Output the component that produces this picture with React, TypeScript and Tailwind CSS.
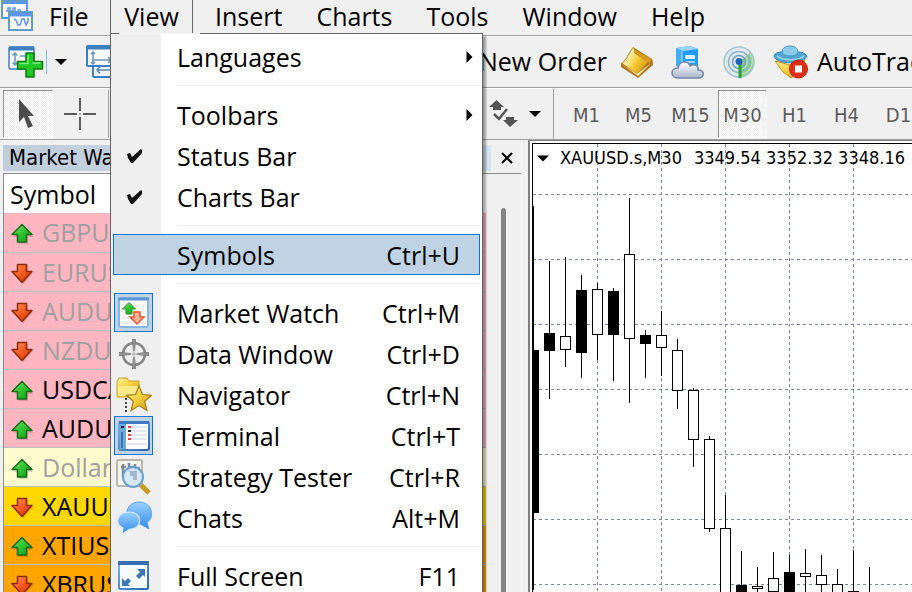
import React from 'react';

type IconProps = { className?: string };

const Defs: React.FC = () => (
  <svg width="0" height="0" className="absolute" aria-hidden="true">
    <defs>
      <linearGradient id="green" x1="0" y1="0" x2="1" y2="1">
        <stop offset="0" stopColor="#7be07b" />
        <stop offset="0.5" stopColor="#2fc42f" />
        <stop offset="1" stopColor="#159a15" />
      </linearGradient>
      <linearGradient id="red" x1="0" y1="0" x2="1" y2="1">
        <stop offset="0" stopColor="#ffa070" />
        <stop offset="0.5" stopColor="#f4581c" />
        <stop offset="1" stopColor="#c53a08" />
      </linearGradient>
      <linearGradient id="gold" x1="0" y1="0" x2="1" y2="1">
        <stop offset="0" stopColor="#fff0a0" />
        <stop offset="0.5" stopColor="#f4cf3c" />
        <stop offset="1" stopColor="#c79412" />
      </linearGradient>
      <linearGradient id="book" x1="0" y1="0" x2="1" y2="0.6">
        <stop offset="0" stopColor="#d79a18" />
        <stop offset="0.35" stopColor="#fff0a0" />
        <stop offset="0.65" stopColor="#f4c832" />
        <stop offset="1" stopColor="#dc9c18" />
      </linearGradient>
      <linearGradient id="blue" x1="0" y1="0" x2="0" y2="1">
        <stop offset="0" stopColor="#9ad2ff" />
        <stop offset="1" stopColor="#3388e6" />
      </linearGradient>
      <linearGradient id="frame" x1="0" y1="0" x2="1" y2="1">
        <stop offset="0" stopColor="#78b2ea" />
        <stop offset="1" stopColor="#2868b0" />
      </linearGradient>
      <linearGradient id="cloud" x1="0" y1="0" x2="0" y2="1">
        <stop offset="0" stopColor="#ffffff" />
        <stop offset="1" stopColor="#aab6cc" />
      </linearGradient>
    </defs>
  </svg>
);

const AppLogo: React.FC<IconProps> = ({ className }) => (
  <svg viewBox="0 0 34 32" className={className}>
    <rect x="2" y="1" width="25" height="17" fill="#fff" stroke="#5b93ff" strokeWidth="2" />
    <path d="M2 2h25" stroke="#5b93ff" strokeWidth="4" />
    <path d="M6 11h2V8h2v3h3V8h2v4h3v-2h3" fill="none" stroke="#5b93ff" strokeWidth="1.5" />
    <rect x="9" y="12" width="23" height="18" fill="#fff" stroke="#5b93ff" strokeWidth="2" />
    <path d="M9 14h23" stroke="#5b93ff" strokeWidth="5" />
    <path d="M14 19l2 1 2 5h2l2-6h2l2 6 2-4v-3" fill="none" stroke="#5b93ff" strokeWidth="1.500" />
    <path d="M2 1h25M2 1v17M9 12v18h23V12z" fill="none" stroke="#69a58a" strokeWidth="2" strokeDasharray="3 4" />
  </svg>
);

const NewChartIcon: React.FC<IconProps> = ({ className }) => (
  <svg viewBox="0 0 36 34" className={className}>
    <rect x="1" y="2" width="25" height="22" rx="1.5" fill="#f7fbff" stroke="#3e7fc2" strokeWidth="1.5" />
    <path d="M1 3.500h25" stroke="#3e7fc2" strokeWidth="4" />
    <path d="M7 8v12M4.500 10.500L7 8l2.500 2.500M4.500 17.500L7 20l2.500-2.500M12 11h6" fill="none" stroke="#6c95b8" strokeWidth="1.500" />
    <path
      d="M18 8h8v8.500h8.500v7.500H26v8h-8v-8H9.500v-7.500H18z"
      fill="#1fc926"
      stroke="#0b7a10"
      strokeWidth="1.500"
      strokeLinejoin="round"
    />
    <path d="M20 10v8.500h-8.500M24.500 18h8" stroke="#7df07e" strokeWidth="1.500" fill="none" />
  </svg>
);

const ProfilesIcon: React.FC<IconProps> = ({ className }) => (
  <svg viewBox="0 0 36 36" className={className}>
    <rect x="7" y="16" width="27" height="17" rx="1" fill="#eef6fd" stroke="#3e7fc2" strokeWidth="2" />
    <path d="M11 26h20M14 22.500L11 26l3 3.500" fill="none" stroke="#5f86a8" strokeWidth="1.5" />
    <rect x="1" y="2" width="30" height="20" rx="1" fill="#f7fbff" stroke="#3e7fc2" strokeWidth="2" />
    <path d="M1 3.500h30" stroke="#3e7fc2" strokeWidth="4" />
    <path d="M7 8v12M5 10l2-2 2 2M5 18l2 2 2-2M7 16h18M22 13l3 3-3 3" fill="none" stroke="#6c95b8" strokeWidth="1.500" />
  </svg>
);

const BookIcon: React.FC<IconProps> = ({ className }) => (
  <svg viewBox="0 0 34 34" className={className}>
    <path d="M1 18c6-3 7-10 12-16l19 12c1 2 1 4 1 6L18 33 1 22z" fill="#b0761a" />
    <path d="M2 18c6-3 7-10 11-15 1 1 2 3 1 5l14 9-11 12z" fill="url(#book)" />
    <path d="M15 8l-1-4 17 10-1 4-2-1z" fill="#d89a20" />
    <path d="M3 20l14 9 14-11-13 13z" fill="#fff3bf" />
  </svg>
);

const CloudIcon: React.FC<IconProps> = ({ className }) => (
  <svg viewBox="0 0 34 34" className={className}>
    <path d="M5 3l14-2 8 3v20H9L5 20z" fill="#1d9bf6" />
    <path d="M5 3l6 3v18l-6-3z" fill="#3fb0fb" />
    <path d="M5 3l14-2 8 3-15 2z" fill="#9ad6fd" />
    <path d="M11 6v17" stroke="#c3e6ff" />
    <rect x="14" y="10" width="10" height="4" rx="1" fill="#d8f0ff" />
    <rect x="14" y="16" width="10" height="2" fill="#9dd7ff" />
    <path
      d="M7 33c-8 0-8-10 0-10 1-7 10-8 12-2 5-3 9 0 8 4 7 0 7 8 0 8z"
      fill="url(#cloud)"
      stroke="#7687a8"
      strokeWidth="1.5"
    />
  </svg>
);

const SignalIcon: React.FC<IconProps> = ({ className }) => (
  <svg viewBox="0 0 34 34" className={className}>
    <circle cx="17" cy="17" r="15.500" fill="#dfe9ea" />
    <path d="M17 17L29 7c8 12-1 25-12 26z" fill="#6ec06a" opacity="0.8" />
    <g fill="none">
      <circle cx="17" cy="17" r="15" stroke="#a6c6cf" strokeWidth="1.500" />
      <circle cx="17" cy="17" r="10.500" stroke="#8fb5cf" strokeWidth="1.500" />
      <circle cx="17" cy="17" r="6.500" stroke="#6f9fca" strokeWidth="1.500" />
    </g>
    <path d="M24 12a8 8 0 0 1-4 12M28 9a13 13 0 0 1-8 20" fill="none" stroke="#b5e0ae" strokeWidth="1.500" />
    <path d="M18 18v15" stroke="#28a52c" strokeWidth="3" />
    <circle cx="17" cy="16.500" r="3.500" fill="#2464b8" />
  </svg>
);

const AutoTradingIcon: React.FC<IconProps> = ({ className }) => (
  <svg viewBox="0 0 36 36" className={className}>
    <path d="M2 17l15 4 15-5-5 13-9 5-8-6z" fill="url(#gold)" stroke="#c79412" />
    <path d="M1 12c2 9 30 9 33 0-3-4-7-4-10-4H10c-5 0-8 1-9 4z" fill="#54a6d2" stroke="#3583b0" />
    <path d="M9 9c0-5 3-7 8-7s8 2 8 7c-3 4-13 4-16 0z" fill="#8dcbea" stroke="#4796c0" />
    <path d="M4 12c6 5 21 5 27 0" fill="none" stroke="#9ad8f0" strokeWidth="1.500" />
    <circle cx="25.500" cy="25" r="9" fill="#df2f14" stroke="#b8200c" />
    <rect x="22" y="21.500" width="7" height="7" fill="#fff" />
  </svg>
);

const Caret: React.FC<IconProps> = ({ className }) => (
  <svg viewBox="0 0 12 6" className={className}>
    <path d="M0 0h12L6 6z" fill="#000" />
  </svg>
);

const CursorIcon: React.FC<IconProps> = ({ className }) => (
  <svg viewBox="0 0 18 32" className={className}>
    <path d="M2 1v23l5-5 4 11 5-2-5-10h6z" fill="#4d4d4d" />
  </svg>
);

const CrosshairIcon: React.FC<IconProps> = ({ className }) => (
  <svg viewBox="0 0 32 32" className={className}>
    <path d="M16 0v13M16 19v13M0 16h13M19 16h13" stroke="#5c5c5c" strokeWidth="2" />
    <path d="M15 16h2" stroke="#5c5c5c" strokeWidth="1" />
  </svg>
);

const ArrowsIcon: React.FC<IconProps> = ({ className }) => (
  <svg viewBox="0 0 30 28" className={className}>
    <path d="M7.500 0L15 7h-3v3H4V7H0z" fill="#555" />
    <path d="M5 14l5 5 8-10" fill="none" stroke="#555" strokeWidth="2.500" />
    <path d="M17 17h8v3h4l-8 7-7-7h3z" fill="#555" />
  </svg>
);

const TickArrow: React.FC<{ up: boolean }> = ({ up }) => (
  <svg viewBox="0 0 24 22" className="h-[22px] w-6 shrink-0">
    <path
      d={up ? 'M12 4L22.500 14h-5.500v7H8v-7H3z' : 'M8 2.500h9v7h5.500L12.500 21 3 9.500h5z'}
      fill="#000"
      opacity="0.15"
    />
    <path
      d={up ? 'M11 1.500L21 11.500h-5.500V19h-9v-7.500H1z' : 'M6.500 1.500h9v7H21L11 19.500 1 8.500h5.500z'}
      fill={up ? 'url(#green)' : 'url(#red)'}
      stroke={up ? '#176a17' : '#8f2a0a'}
      strokeWidth="1.500"
      strokeLinejoin="round"
    />
  </svg>
);

const CheckMark: React.FC = () => (
  <svg viewBox="0 0 16 16" className="ml-0.5 h-4 w-4">
    <path d="M0 6l3-1 2 4 9-8 1 1v3L6 15H4L1 10z" fill="#111" />
  </svg>
);

const MarketWatchIcon: React.FC = () => (
  <svg viewBox="0 0 32 32" className="h-8 w-8">
    <rect x="1" y="1" width="29" height="29" rx="2" fill="#fdfdfd" stroke="#8ab6e6" strokeWidth="2" />
    <path d="M0 2h31" stroke="#5d97d6" strokeWidth="3" />
    <path d="M4 9h24M4 15h24M4 21h24M4 26h24" stroke="#dedede" />
    <path d="M11 5.500L17.500 12H14v5H8v-5H4.500z" fill="url(#green)" stroke="#279427" />
    <path d="M16 15h6v5h4l-7 7-7-7h4z" fill="#fbb298" stroke="#de5a30" strokeWidth="1.500" />
  </svg>
);

const DataWindowIcon: React.FC = () => (
  <svg viewBox="0 0 32 32" className="h-8 w-8">
    <circle cx="16" cy="16" r="11" fill="none" stroke="#858585" strokeWidth="2.500" />
    <path d="M14 1h4l-1 12h-2zM14 31h4l-1-12h-2zM1 14v4l12-1v-2zM31 14v4l-12-1v-2z" fill="#777" />
    <path d="M16 1v30M1 16h30" stroke="#aaa" />
  </svg>
);

const NavigatorIcon: React.FC = () => (
  <svg viewBox="0 0 36 36" className="h-9 w-9">
    <path d="M1 4l2-3h8l2 3h10v16H1z" fill="url(#gold)" stroke="#c9a227" />
    <path d="M2 9h20v10H2z" fill="#fbe98a" />
    <path d="M10 21v14" stroke="#444" strokeWidth="2" strokeDasharray="2 2" />
    <path
      d="M23 9l3.500 8.500 9 .8-6.800 6 2.200 9.200-7.900-4.900-7.900 4.900 2.200-9.200-6.800-6 9-.8z"
      fill="url(#gold)"
      stroke="#a67c12"
      strokeWidth="1.200"
    />
  </svg>
);

const TerminalIcon: React.FC = () => (
  <svg viewBox="0 0 32 32" className="h-8 w-8">
    <rect x="1" y="2" width="30" height="28" rx="2" fill="#fdfdff" stroke="url(#frame)" strokeWidth="2" />
    <rect x="2" y="3" width="6" height="26" fill="#6fa8dd" />
    <path d="M4 12v16" stroke="#2d5f98" strokeWidth="1.500" />
    <path d="M1 2.500h30" stroke="#3c7cc4" strokeWidth="3" />
    <path d="M13 7h16M13 11h16M13 15h16M13 19h16M9 24h20" stroke="#c4d0ea" />
    <path d="M10 7h3M10 15h3M10 19h3" stroke="#ee4040" strokeWidth="2" />
    <path d="M3 7h3M10 11h3" stroke="#222" strokeWidth="2" />
  </svg>
);

const StrategyIcon: React.FC = () => (
  <svg viewBox="0 0 36 36" className="h-9 w-9">
    <rect x="1" y="1" width="25" height="26" rx="1" fill="#f4f4f0" stroke="#a8a498" strokeWidth="1.500" />
    <path d="M7 5v13M5 8h5M13 4v9M13 8h5M19 5v8M21 9h3" stroke="#7b8b99" strokeWidth="2.500" />
    <path d="M25 26l8 8" stroke="#c79a20" strokeWidth="5" />
    <circle cx="17" cy="18" r="10" fill="#cfe6fa" fillOpacity="0.85" stroke="#6ba0cf" strokeWidth="2" />
    <path d="M14 12h7v9h-4v-4h-3z" fill="#8498ac" opacity="0.6" />
  </svg>
);

const ChatsIcon: React.FC = () => (
  <svg viewBox="0 0 36 34" className="h-[34px] w-9">
    <path d="M23 1c15 0 15 18 8 20l2 7-9-5C6 24 7 1 23 1z" fill="url(#blue)" stroke="#5aa5ee" />
    <path
      d="M13 11c15 0 13 18 1 17l-8 5 1-6C-2 23 1 11 13 11z"
      fill="url(#blue)"
      stroke="#d6ebff"
      strokeWidth="1.200"
    />
  </svg>
);

const FullScreenIcon: React.FC = () => (
  <svg viewBox="0 0 32 32" className="h-8 w-8">
    <rect x="1" y="2" width="29" height="27" rx="1.500" fill="#f6fbff" stroke="url(#frame)" strokeWidth="2" />
    <path d="M0 3h31" stroke="#3670b2" strokeWidth="4" />
    <path d="M19 9h8v8l-2-2-4 4-3-3 4-4z" fill="#3c78b4" />
    <path d="M4 18v8h8l-2-2 3-3-3-3-3 3z" fill="#3c78b4" />
  </svg>
);

interface MenuEntry {
  label: string;
  shortcut?: string;
  submenu?: boolean;
  checked?: boolean;
  selected?: boolean;
  active?: boolean;
  icon?: React.ReactNode;
}

const viewMenu: MenuEntry[][] = [
  [{ label: 'Languages', submenu: true }],
  [
    { label: 'Toolbars', submenu: true },
    { label: 'Status Bar', checked: true },
    { label: 'Charts Bar', checked: true },
  ],
  [{ label: 'Symbols', shortcut: 'Ctrl+U', selected: true }],
  [
    { label: 'Market Watch', shortcut: 'Ctrl+M', icon: <MarketWatchIcon />, active: true },
    { label: 'Data Window', shortcut: 'Ctrl+D', icon: <DataWindowIcon /> },
    { label: 'Navigator', shortcut: 'Ctrl+N', icon: <NavigatorIcon /> },
    { label: 'Terminal', shortcut: 'Ctrl+T', icon: <TerminalIcon />, active: true },
    { label: 'Strategy Tester', shortcut: 'Ctrl+R', icon: <StrategyIcon /> },
    { label: 'Chats', shortcut: 'Alt+M', icon: <ChatsIcon /> },
  ],
  [{ label: 'Full Screen', shortcut: 'F11', icon: <FullScreenIcon /> }],
];

const MenuItem: React.FC<{ entry: MenuEntry }> = ({ entry }) => (
  <button
    role="menuitem"
    className={`flex h-[41px] w-full items-center border pr-[19px] text-left ${
      entry.selected ? 'border-[#0078d7] bg-[#bfd3e4]' : 'border-transparent'
    }`}
  >
    <span
      className={`flex h-[39px] w-[39px] shrink-0 items-center justify-center border ${
        entry.active ? 'border-[#0078d7] bg-[#bfd3e4]' : 'border-transparent'
      }`}
    >
      {entry.checked ? <CheckMark /> : entry.icon}
    </span>
    <span className="ml-6 flex-1 whitespace-nowrap">{entry.label}</span>
    {entry.shortcut && <span>{entry.shortcut}</span>}
    {entry.submenu && (
      <svg viewBox="0 0 6 12" className="-mr-[13px] h-3 w-[7px]">
        <path d="M0 0v12l6-6z" fill="#000" />
      </svg>
    )}
  </button>
);

const ViewMenu: React.FC = () => (
  <div
    role="menu"
    className="absolute -left-px top-[33px] z-20 w-[373px] border border-[#666] bg-[linear-gradient(to_right,#efefef_50px,#fff_50px)] px-0.5 pt-0.5 shadow-[3px_3px_2px_rgba(0,0,0,0.35)]"
  >
    {/* the open tab runs into the menu, so its top edge is broken here */}
    <div className="absolute -top-px left-2 h-px w-[81px] bg-[#f3f3f3]" />
    {viewMenu.map((group, i) => (
      <div key={group[0].label}>
        {i > 0 && (
          <div className="ml-16 h-[17px] pt-2">
            <div className="h-px bg-[#ececec]" />
          </div>
        )}
        {group.map((entry) => (
          <MenuItem key={entry.label} entry={entry} />
        ))}
      </div>
    ))}
  </div>
);

const MenuBar: React.FC = () => (
  <nav className="flex h-9 shrink-0 items-stretch border-b border-[#a0a0a0]">
    <AppLogo className="h-8 w-[34px] shrink-0" />
    <button className="w-[76px] shrink-0 pb-1.5 pl-[15px] text-left">File</button>
    <div className="relative w-[83px] shrink-0 border-x border-[#666]">
      <button className="h-8 w-full pb-0.5">View</button>
      <ViewMenu />
    </div>
    {['Insert', 'Charts', 'Tools', 'Window', 'Help'].map((name) => (
      <button key={name} className="ml-[22px] mr-3 shrink-0 pb-1.5">
        {name}
      </button>
    ))}
  </nav>
);

const Toolbar: React.FC = () => (
  <div className="flex h-[52px] shrink-0 items-center whitespace-nowrap border-b border-[#a0a0a0] border-t border-t-white">
    <div className="flex w-[479px] shrink-0 items-center pl-2">
      <button aria-label="New chart" className="flex items-center">
        <NewChartIcon className="h-[34px] w-9" />
        <span className="ml-0.5 h-6 w-px bg-[#7ab8f0]" />
        <Caret className="ml-2 h-1.5 w-3" />
      </button>
      <button aria-label="Profiles" className="ml-[19px]">
        <ProfilesIcon className="h-9 w-9" />
      </button>
    </div>
    <button className="pb-0.5">New Order</button>
    <div className="ml-[13px] flex items-center gap-[17px]">
      <button aria-label="MetaEditor">
        <BookIcon className="h-[34px] w-[34px]" />
      </button>
      <button aria-label="Cloud">
        <CloudIcon className="h-[34px] w-[34px]" />
      </button>
      <button aria-label="Signals">
        <SignalIcon className="h-[34px] w-[34px]" />
      </button>
      <button className="flex items-center gap-2">
        <AutoTradingIcon className="h-9 w-9" />
        <span className="pb-0.5">AutoTrading</span>
      </button>
    </div>
  </div>
);

const pressed =
  'border border-b-white border-l-[#909090] border-r-white border-t-[#909090] bg-[conic-gradient(#fff_25%,#eee_0_50%,#fff_0_75%,#eee_0)] bg-[length:2px_2px]';

const ChartBar: React.FC = () => (
  <div className="flex h-[52px] shrink-0 items-center border-b border-[#a0a0a0] border-t border-t-white">
    <div className="flex w-[489px] shrink-0 items-center pl-[3px]">
      <button aria-label="Cursor" className={`flex h-12 w-[50px] items-center justify-center ${pressed}`}>
        <CursorIcon className="mr-1 h-8 w-[18px]" />
      </button>
      <button aria-label="Crosshair" className="ml-[11px]">
        <CrosshairIcon className="h-8 w-8" />
      </button>
      <span className="ml-3 h-12 w-px bg-[#a0a0a0]" />
    </div>
    <button aria-label="Arrows" className="flex items-center">
      <ArrowsIcon className="h-7 w-[30px]" />
      <Caret className="ml-2.5 h-1.5 w-3" />
    </button>
    <span className="ml-3 h-full w-0.5 border-l border-[#a0a0a0] bg-white" />
    <span className="ml-0.5 h-11 w-[3px] bg-[repeating-linear-gradient(#8c8c8c_0_1px,transparent_1px_2px)]" />
    <div className="ml-1.5 flex gap-[3px] font-['DejaVu_Sans_Condensed','DejaVu_Sans',sans-serif] text-xl text-[#5c5c5c]">
      {['M1', 'M5', 'M15', 'M30', 'H1', 'H4', 'D1'].map((tf) => (
        <button
          key={tf}
          className={`h-12 w-[49px] shrink-0 pt-0.5 ${tf === 'M30' ? pressed : 'border border-transparent'}`}
        >
          {tf}
        </button>
      ))}
    </div>
  </div>
);

const symbols = [
  { name: 'GBPUSD', up: true, row: 'bg-[#ffb6c1] text-[#a0a0a0]' },
  { name: 'EURUSD', up: false, row: 'bg-[#ffb6c1] text-[#a0a0a0]' },
  { name: 'AUDUSD', up: false, row: 'bg-[#ffb6c1] text-[#a0a0a0]' },
  { name: 'NZDUSD', up: false, row: 'bg-[#ffb6c1] text-[#a0a0a0]' },
  { name: 'USDCAD', up: true, row: 'bg-[#ffb6c1] text-black' },
  { name: 'AUDUSD.s', up: true, row: 'bg-[#ffb6c1] text-black' },
  { name: 'Dollar', up: true, row: 'bg-[#fffacd] text-[#a0a0a0]' },
  { name: 'XAUUSD', up: false, row: 'bg-[#ffd700] text-black' },
  { name: 'XTIUSD', up: true, row: 'bg-[#ffa500] text-black' },
  { name: 'XBRUSD', up: false, row: 'bg-[#ffa500] text-black' },
];

const MarketWatch: React.FC = () => (
  <section className="flex w-[522px] shrink-0 flex-col border-r border-white pl-[3px] pt-[5px]">
    <header className="flex h-[26px] shrink-0 items-center">
      <h2 className="h-full w-[488px] bg-[linear-gradient(to_right,#bfcddb,#d6e4f2)] pl-1.5 font-['DejaVu_Sans_Condensed','DejaVu_Sans',sans-serif] text-[22px] leading-[26px]">
        Market Watch
      </h2>
      <button aria-label="Close" className="ml-2.5">
        <svg viewBox="0 0 12 12" className="h-3 w-3">
          <path d="M1 1l10 10M11 1L1 11" stroke="#000" strokeWidth="2" />
        </svg>
      </button>
    </header>
    <div className="mt-0.5 flex min-h-0 flex-1 border-l border-t border-[#8c8c8c]">
      <table className="w-[482px] self-start border-collapse">
        <thead>
          <tr className="h-[39px] bg-white">
            <th className="p-0 pl-1.5 text-left font-normal leading-[38px]">Symbol</th>
          </tr>
        </thead>
        <tbody>
          {symbols.map((s) => (
            <tr key={s.name} className={`h-[39px] border-b border-[#c0c0c0] ${s.row}`}>
              <td className="p-0 pl-[7px]">
                <div className="flex h-[38px] items-center gap-[7px]">
                  <span className="pt-1">
                    <TickArrow up={s.up} />
                  </span>
                  {s.name}
                </div>
              </td>
            </tr>
          ))}
        </tbody>
      </table>
      <div className="ml-[15px] mt-[34px] w-[5px] rounded-t-full bg-[#858585]" />
    </div>
  </section>
);

// one candle every 16px: [wick top, wick bottom, body top, body bottom, bearish]
const candles: [number, number, number, number, boolean][] = [
  [62, 446, 206, 369, true],
  [117, 255, 189, 207, true],
  [113, 223, 192, 206, false],
  [131, 234, 146, 209, true],
  [139, 216, 145, 191, false],
  [144, 237, 147, 191, true],
  [54, 259, 110, 195, false],
  [186, 234, 191, 200, true],
  [167, 232, 191, 204, false],
  [195, 265, 206, 247, false],
  [244, 323, 246, 296, false],
  [292, 388, 295, 385, false],
  [351, 700, 384, 600, false],
  [407, 700, 441, 600, true],
  [423, 700, 442, 445, false],
  [408, 700, 434, 448, false],
  [411, 700, 428, 600, true],
  [405, 700, 429, 433, false],
  [411, 700, 431, 441, false],
  [425, 700, 440, 600, false],
  [406, 700, 447, 600, false],
  [423, 700, 700, 710, false],
];

const gridX = Array.from({ length: 20 }, (_, i) => 64 + i * 64);
const gridY = Array.from({ length: 12 }, (_, i) => 50 + i * 65);

const PriceChart: React.FC = () => (
  <section className="ml-1.5 flex min-w-0 flex-1 border-l-2 border-t border-[#808080] bg-white pl-0.5 pt-0.5">
    <div className="relative min-w-0 flex-1 overflow-hidden border-l border-t border-black">
      <svg className="h-full w-full" shapeRendering="crispEdges">
        <g stroke="#778899" strokeDasharray="3 3">
          {gridX.map((x) => (
            <line key={x} x1={x + 0.5} x2={x + 0.5} y1="0" y2="1000" />
          ))}
          {gridY.map((y) => (
            <line key={y} x1="0" x2="2000" y1={y + 0.5} y2={y + 0.5} />
          ))}
        </g>
        {candles.map(([high, low, top, bottom, bearish], i) => (
          <g key={i} stroke="#000" fill={bearish ? '#000' : '#fff'}>
            <line x1={i * 16 + 0.5} x2={i * 16 + 0.5} y1={high} y2={low} />
            <rect x={i * 16 - 4.5} y={top + 0.5} width="10" height={bottom - top - 1} />
          </g>
        ))}
      </svg>
      <div className="absolute left-1 top-0 flex items-center whitespace-nowrap font-['DejaVu_Sans_Condensed','DejaVu_Sans',sans-serif] text-lg leading-7">
        <Caret className="mr-[11px] h-[7px] w-3" />
        <span>XAUUSD.s,M30</span>
        <span className="ml-3">3349.54 3352.32 3348.16</span>
      </div>
    </div>
  </section>
);

const App: React.FC = () => (
  <div className="flex h-screen flex-col overflow-hidden bg-[#f0f0f0] font-['Open_Sans','Noto_Sans',sans-serif] text-[25px] leading-8 text-black">
    <Defs />
    <MenuBar />
    <Toolbar />
    <ChartBar />
    <main className="flex min-h-0 flex-1">
      <MarketWatch />
      <PriceChart />
    </main>
  </div>
);

export default App;
